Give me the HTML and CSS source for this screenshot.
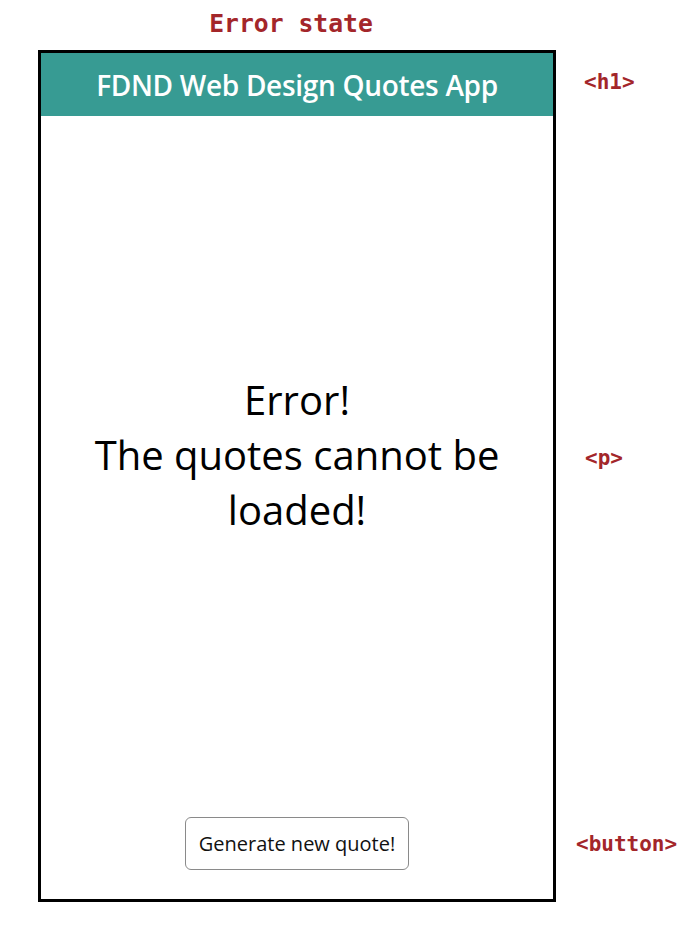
FILE: index.html
```html
<!DOCTYPE html>
<html lang="en">
<head>
<meta charset="utf-8">
<title>Error state</title>
<link rel="stylesheet" href="styles.css">
</head>
<body>
<div class="page">
  <h2 class="state-title">Error state</h2>
  <div class="frame">
    <header class="app-header">
      <h1 class="app-title">FDND Web Design Quotes App</h1>
    </header>
    <main class="app-main">
      <p class="error-msg">Error!<br>The quotes cannot be loaded!</p>
    </main>
    <footer class="app-footer">
      <button class="gen-btn" type="button">Generate new quote!</button>
    </footer>
  </div>
  <div class="labels">
    <div class="label-row label-row--h1"><span class="tag tag--h1">&lt;h1&gt;</span></div>
    <div class="label-row label-row--p"><span class="tag tag--p">&lt;p&gt;</span></div>
    <div class="label-row label-row--btn"><span class="tag tag--btn">&lt;button&gt;</span></div>
  </div>
</div>
</body>
</html>
```
FILE: styles.css
```css
html, body {
  margin: 0;
  padding: 0;
  background: #ffffff;
}

.page {
  display: grid;
  grid-template-columns: 38px 518px 1fr;
  grid-template-rows: 50px 852px;
}

.state-title {
  grid-column: 2;
  grid-row: 1;
  margin: 0;
  padding: 9px 12px 0 0;
  text-align: center;
  font-family: "DejaVu Sans Mono", "Liberation Mono", monospace;
  font-weight: bold;
  font-size: 24.7px;
  line-height: 30px;
  color: #a3262a;
}

.frame {
  grid-column: 2;
  grid-row: 2;
  border: 3px solid #000;
  display: flex;
  flex-direction: column;
  font-family: "Open Sans", sans-serif;
}

.app-header {
  height: 63px;
  background: #379b93;
  display: flex;
  align-items: center;
  justify-content: center;
}

.app-title {
  margin: 0;
  color: #fff;
  font-size: 28px;
  font-weight: 600;
  letter-spacing: -0.3px;
}

.app-main {
  flex: 1;
  display: flex;
  align-items: center;
  justify-content: center;
  padding: 0 30px 8px;
}

.error-msg {
  margin: 0;
  text-align: center;
  font-size: 40px;
  line-height: 55px;
  color: #000;
  max-width: 440px;
}

.app-footer {
  height: 99px;
  display: flex;
  justify-content: center;
  align-items: flex-start;
  padding-top: 17px;
  box-sizing: border-box;
}

.gen-btn {
  width: 224px;
  height: 53px;
  background: #fff;
  border: 1px solid #8a8a8a;
  border-radius: 6px;
  font-family: "Open Sans", sans-serif;
  font-size: 20px;
  color: #111;
  padding: 0;
}

.labels {
  grid-column: 3;
  grid-row: 2;
  display: flex;
  flex-direction: column;
  padding: 3px 0;
}

.label-row {
  display: flex;
  align-items: center;
}

.label-row--h1 {
  height: 57px;
  padding-left: 28px;
}

.label-row--p {
  flex: 1;
  padding-left: 29px;
  padding-top: 6px;
}

.label-row--btn {
  height: 53px;
  margin-top: 17px;
  margin-bottom: 29px;
  padding-left: 20px;
}

.tag {
  font-family: "DejaVu Sans Mono", "Liberation Mono", monospace;
  font-weight: bold;
  font-size: 21px;
  color: #a3262a;
}
```
